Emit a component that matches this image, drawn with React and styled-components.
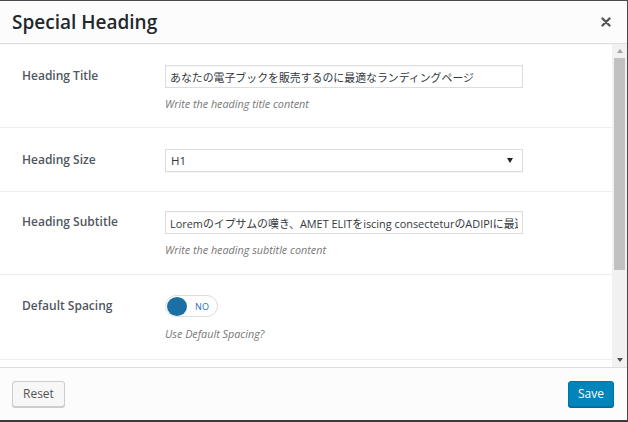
import React from 'react';
import styled, { createGlobalStyle } from 'styled-components';

const GlobalStyle = createGlobalStyle`
  html, body {
    margin: 0;
    padding: 0;
    background: #4a4a4a;
  }
  * {
    box-sizing: border-box;
  }
`;

const FONT = `"Open Sans", "Noto Sans CJK JP", sans-serif`;

const Modal = styled.div`
  width: 628px;
  height: 422px;
  display: flex;
  flex-direction: column;
  background: #fff;
  border-top: 1px solid #4a4a4a;
  border-right: 1px solid #4a4a4a;
  border-bottom: 2px solid #3a3a3a;
  font-family: ${FONT};
  color: #23282d;
  overflow: hidden;
`;

const Header = styled.div`
  height: 43px;
  flex: none;
  display: flex;
  align-items: center;
  justify-content: space-between;
  padding: 0 14px 0 12px;
  background: #fcfcfc;
  border-bottom: 1px solid #ddd;
  box-shadow: 0 1px 2px rgba(0, 0, 0, 0.04);
`;

const Title = styled.h1`
  margin: 0;
  font-size: 19px;
  font-weight: 600;
  line-height: 1;
  color: #23282d;
`;

const Close = styled.button`
  border: 0;
  background: none;
  padding: 0;
  width: 14px;
  height: 14px;
  display: flex;
  align-items: center;
  justify-content: center;
  cursor: pointer;
`;

const Body = styled.div`
  flex: 1;
  display: flex;
  min-height: 0;
`;

const Form = styled.div`
  flex: 1;
  overflow: hidden;
`;

const Row = styled.div`
  display: flex;
  align-items: flex-start;
  padding: ${(p) => p.$pad || '21px 0 19px'};
  border-bottom: 1px solid #eee;
`;

const Label = styled.div`
  width: 165px;
  flex: none;
  padding: 2px 0 0 22px;
  font-size: 12px;
  font-weight: 600;
  line-height: 18px;
  color: #50575e;
`;

const Field = styled.div`
  width: 358px;
  display: flex;
  flex-direction: column;
`;

const TextInput = styled.input`
  width: 358px;
  height: 23px;
  margin: 0;
  padding: 0 4px;
  border: 1px solid #ddd;
  box-shadow: inset 0 1px 2px rgba(0, 0, 0, 0.04);
  background: #fff;
  font-family: ${FONT};
  font-size: 10.9px;
  color: #32373c;
  outline: none;
`;

const Select = styled.div`
  width: 358px;
  height: 23px;
  display: flex;
  align-items: center;
  justify-content: space-between;
  padding: 0 9px 0 5px;
  border: 1px solid #ddd;
  box-shadow: 0 1px 1px rgba(0, 0, 0, 0.04);
  background: #fff;
  font-size: 11.5px;
  color: #32373c;
`;

const Caret = styled.span`
  width: 0;
  height: 0;
  border-left: 3px solid transparent;
  border-right: 3px solid transparent;
  border-top: 5px solid #222;
`;

const Help = styled.div`
  margin-top: ${(p) => p.$gap || 9}px;
  font-size: 10.8px;
  font-style: italic;
  line-height: 13px;
  color: #777;
`;

const Toggle = styled.div`
  width: 53px;
  height: 22px;
  display: flex;
  align-items: center;
  gap: 8px;
  padding: 1px;
  border: 1px solid #ddd;
  border-radius: 12px;
  background: #fff;
`;

const Knob = styled.span`
  width: 20px;
  height: 19px;
  border-radius: 50%;
  background: #1a6fa3;
`;

const ToggleText = styled.span`
  font-size: 9px;
  color: #2271b1;
  letter-spacing: 0.2px;
`;

const Scrollbar = styled.div`
  width: 15px;
  flex: none;
  display: flex;
  flex-direction: column;
  align-items: center;
  background: #f1f1f1;
`;

const Arrow = styled.span`
  height: 14px;
  flex: none;
  display: flex;
  align-items: center;
  justify-content: center;
  &::before {
    content: '';
    width: 0;
    height: 0;
    border-left: 3.5px solid transparent;
    border-right: 3.5px solid transparent;
    ${(p) =>
      p.$down
        ? 'border-top: 4px solid #505050;'
        : 'border-bottom: 4px solid #a3a3a3;'}
  }
`;

const Thumb = styled.div`
  width: 11px;
  height: 212px;
  background: #c1c1c1;
`;

const Track = styled.div`
  flex: 1;
`;

const Footer = styled.div`
  height: 53px;
  flex: none;
  display: flex;
  align-items: center;
  justify-content: space-between;
  padding: 0 13px 0 12px;
  background: #fcfcfc;
  border-top: 1px solid #ddd;
`;

const Button = styled.button`
  height: 26px;
  display: flex;
  align-items: center;
  justify-content: center;
  padding: 0 ${(p) => (p.$primary ? 9 : 10)}px;
  border: 1px solid ${(p) => (p.$primary ? '#0073aa' : '#ccc')};
  border-radius: 3px;
  background: ${(p) => (p.$primary ? '#0085ba' : '#f7f7f7')};
  box-shadow: ${(p) => (p.$primary ? '0 1px 0 #006799' : '0 1px 0 #ccc')};
  color: ${(p) => (p.$primary ? '#fff' : '#555')};
  font-family: ${FONT};
  font-size: 12px;
  line-height: 16px;
  cursor: pointer;
`;

const CloseIcon = () => (
  <svg width="10" height="10" viewBox="0 0 10 10">
    <path d="M1.5 1.5 L8.5 8.5 M8.5 1.5 L1.5 8.5" stroke="#555" strokeWidth="2.4" strokeLinecap="round" />
  </svg>
);

export default function App() {
  return (
    <>
      <GlobalStyle />
      <Modal>
        <Header>
          <Title>Special Heading</Title>
          <Close aria-label="Close">
            <CloseIcon />
          </Close>
        </Header>
        <Body>
          <Form>
            <Row $pad="21px 0 17px">
              <Label>Heading Title</Label>
              <Field>
                <TextInput readOnly value="あなたの電子ブックを販売するのに最適なランディングページ" />
                <Help>Write the heading title content</Help>
              </Field>
            </Row>
            <Row>
              <Label>Heading Size</Label>
              <Field>
                <Select>
                  <span>H1</span>
                  <Caret />
                </Select>
              </Field>
            </Row>
            <Row $pad="19px 0 18px">
              <Label>Heading Subtitle</Label>
              <Field>
                <TextInput
                  readOnly
                  value="Loremのイプサムの嘆き、AMET ELITをiscing consecteturのADIPIに最適な"
                />
                <Help>Write the heading subtitle content</Help>
              </Field>
            </Row>
            <Row $pad="20px 0 19px">
              <Label>Default Spacing</Label>
              <Field>
                <Toggle>
                  <Knob />
                  <ToggleText>NO</ToggleText>
                </Toggle>
                <Help $gap={10}>Use Default Spacing?</Help>
              </Field>
            </Row>
          </Form>
          <Scrollbar>
            <Arrow />
            <Thumb />
            <Track />
            <Arrow $down />
          </Scrollbar>
        </Body>
        <Footer>
          <Button>Reset</Button>
          <Button $primary>Save</Button>
        </Footer>
      </Modal>
    </>
  );
}
